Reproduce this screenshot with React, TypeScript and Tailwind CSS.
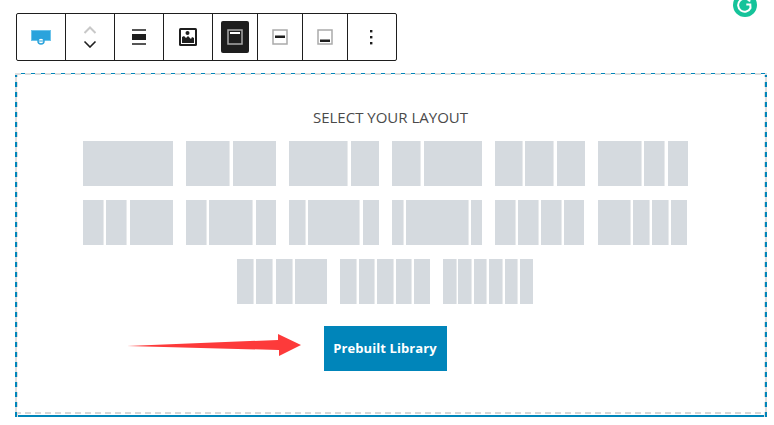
import React from 'react'

const layouts: number[][][] = [
  [[90], [43, 43], [58, 28], [28, 58], [27, 28, 28], [43, 20, 20]],
  [[20, 20, 43], [20, 43, 20], [16, 51, 16], [11, 62, 11], [20, 20, 20, 20], [32, 16, 16, 16]],
  [[16, 16, 16, 32], [15.5, 15.5, 15.5, 15.5, 16], [12.5, 12.5, 12.5, 12.5, 12.5, 13]],
]

const Tile = ({ cols }: { cols: number[] }) => (
  <div className="flex h-[45px] w-[90px] justify-between">
    {cols.map((w, i) => (
      <div
        key={i}
        className={`h-full bg-[#d5dadf] ${i < cols.length - 1 ? 'shadow-[1px_0_0_#e8eaec]' : ''}`}
        style={{ width: w }}
      />
    ))}
  </div>
)

const ToolCell = ({ className = '', children }: { className?: string; children: React.ReactNode }) => (
  <div className={`flex h-full items-center justify-center border-r border-[#1e1e1e] ${className}`}>{children}</div>
)

const App = () => {
  return (
    <div className="relative h-[425px] w-[774px] overflow-hidden bg-white pl-[15px] pt-[13px] font-['Open_Sans',sans-serif]">
      <div className="ml-px flex h-[48px] w-[381px] rounded-[2px] border border-[#1e1e1e] bg-white">
        <ToolCell className="w-[49px]">
          <svg width="20" height="16" viewBox="0 0 20 16">
            <rect x="0.5" y="1.5" width="19" height="10" fill="#2aa3dc" stroke="#6cc3ea" />
            <circle cx="10" cy="12" r="3" fill="#fff" stroke="#2aa3dc" strokeWidth="1.5" />
            <rect x="8" y="11.5" width="4" height="1" fill="#2aa3dc" />
          </svg>
        </ToolCell>
        <ToolCell className="w-[49px]">
          <svg width="14" height="22" viewBox="0 0 14 22" fill="none">
            <path d="M1.5 7L7 1.5L12.5 7" stroke="#c8c8c8" strokeWidth="2" />
            <path d="M1.5 15.5L7 21L12.5 15.5" stroke="#1e1e1e" strokeWidth="1.6" />
          </svg>
        </ToolCell>
        <ToolCell className="w-[49px]">
          <svg width="14" height="16" viewBox="0 0 14 16">
            <rect width="14" height="2" y="0" fill="#555" />
            <rect width="14" height="6" y="5" fill="#1e1e1e" />
            <rect width="14" height="2" y="14" fill="#555" />
          </svg>
        </ToolCell>
        <ToolCell className="w-[49px]">
          <svg width="18" height="18" viewBox="0 0 18 18">
            <rect width="18" height="18" rx="1.5" fill="#1e1e1e" />
            <rect x="2" y="2" width="14" height="14" fill="#fff" />
            <path d="M3 15V9l2-1 2 2 2-2 3 3 1-2 2 1v5z" fill="#1e1e1e" />
            <circle cx="8.5" cy="5" r="2" fill="#1e1e1e" />
          </svg>
        </ToolCell>
        <ToolCell className="w-[45px]">
          <div className="flex h-[32px] w-[28px] items-center justify-center rounded-[2px] bg-[#1e1e1e]">
            <svg width="16" height="16" viewBox="0 0 16 16">
              <rect x="1" y="1" width="14" height="14" fill="none" stroke="#aaa" strokeWidth="1.5" />
              <rect x="3" y="3" width="10" height="2" fill="#fff" />
            </svg>
          </div>
        </ToolCell>
        <ToolCell className="w-[45px]">
          <svg width="16" height="16" viewBox="0 0 16 16">
            <rect x="1" y="1" width="14" height="14" fill="none" stroke="#aaa" strokeWidth="1.5" />
            <rect x="3" y="6.5" width="10" height="2.5" fill="#1e1e1e" />
          </svg>
        </ToolCell>
        <ToolCell className="w-[45px]">
          <svg width="16" height="16" viewBox="0 0 16 16">
            <rect x="1" y="1" width="14" height="14" fill="none" stroke="#aaa" strokeWidth="1.5" />
            <rect x="3" y="10.5" width="10" height="2.5" fill="#1e1e1e" />
          </svg>
        </ToolCell>
        <div className="flex h-full flex-1 items-center justify-center">
          <svg width="4" height="16" viewBox="0 0 4 16">
            <rect x="0" y="1" width="2.4" height="2.4" fill="#1e1e1e" />
            <rect x="0" y="7" width="2.4" height="2.4" fill="#1e1e1e" />
            <rect x="0" y="13" width="2.4" height="2.4" fill="#1e1e1e" />
          </svg>
        </div>
      </div>

      {/* dashed frame: grey and blue dashes alternate on three sides, solid blue along the bottom */}
      <div className="mt-3 h-[344px] w-[752px] [background:repeating-linear-gradient(90deg,transparent_0_6px,#0085ba_6px_10px)_top/100%_1px_no-repeat,repeating-linear-gradient(90deg,#ddd_0_6px,#fff_6px_10px)_0_1px/100%_1px_no-repeat,repeating-linear-gradient(90deg,#ddd_0_6px,transparent_6px_10px)_top/100%_1px_no-repeat,repeating-linear-gradient(0deg,#0085ba_0_5px,#ddd_5px_10px)_left/2px_100%_no-repeat,repeating-linear-gradient(0deg,#ddd_0_5px,#fff_5px_10px)_2px_0/1px_100%_no-repeat,repeating-linear-gradient(0deg,#0085ba_0_5px,#ddd_5px_10px)_right/2px_100%_no-repeat,repeating-linear-gradient(0deg,#ddd_0_5px,#fff_5px_10px)_749px_0/1px_100%_no-repeat,repeating-linear-gradient(90deg,#d8d8d8_0_6px,#fff_6px_10px)_0_339px/100%_2px_no-repeat,linear-gradient(#0085ba,#0085ba)_bottom/100%_2px_no-repeat]">
        <div className="mx-[2px] flex h-[341px] flex-col items-center pr-[12px] pt-[34px]">
          <div className="ml-[11px] text-[15px] leading-[20px] text-[#4a4a4a]">SELECT YOUR LAYOUT</div>
          <div className="mt-[14px] flex flex-col items-center gap-[14px]">
            {layouts.map((row, r) => (
              <div key={r} className="flex gap-[13px]">
                {row.map((cols, t) => (
                  <Tile key={t} cols={cols} />
                ))}
              </div>
            ))}
          </div>
          <div className="mt-[22px] flex h-[45px] w-[123px] items-center justify-center bg-[#0085ba] pt-px text-[13px] font-bold tracking-[0.1px] text-white">
            Prebuilt Library
          </div>
        </div>
      </div>

      <svg className="absolute left-[127px] top-[333px]" width="176" height="25" viewBox="0 0 176 25">
        <path d="M0 13 L151 7 L151 1 L174 12 L152 23 L152 17 Z" fill="#fd3a3a" />
      </svg>

      <svg className="absolute left-[733px] top-[-7px]" width="24" height="24" viewBox="0 0 24 24">
        <circle cx="12" cy="12" r="12" fill="#15c39a" />
        <path d="M17 8.5A6.5 6.5 0 1 0 17.5 15l-.2-3.5h-4" fill="none" stroke="#fff" strokeWidth="2" />
      </svg>
    </div>
  )
}

export default App
